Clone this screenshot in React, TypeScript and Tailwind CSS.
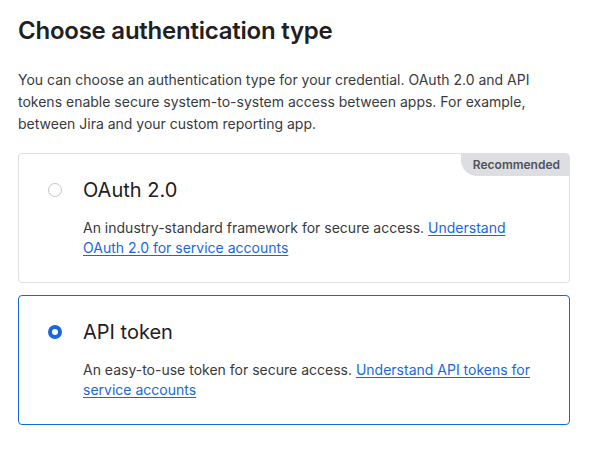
import React from "react";

type Option = {
	id: string;
	title: string;
	text: string;
	link: string;
	badge?: string;
};

const options: Option[] = [
	{
		id: "oauth",
		title: "OAuth 2.0",
		text: "An industry-standard framework for secure access. ",
		link: "Understand OAuth 2.0 for service accounts",
		badge: "Recommended",
	},
	{
		id: "token",
		title: "API token",
		text: "An easy-to-use token for secure access. ",
		link: "Understand API tokens for service accounts",
	},
];

function Radio({ checked }: { checked: boolean }) {
	if (checked) {
		return (
			<span className="block h-[14px] w-[14px] rounded-full border-[4px] border-[#1868db] bg-white" />
		);
	}
	return (
		<span className="block h-[14px] w-[14px] rounded-full border border-[#c3c6cc] bg-white" />
	);
}

export default function App() {
	const selected = "token";

	return (
		<div
			className="min-h-[457px] bg-white pl-[18px] pr-[26px] pt-[15px] text-[#292a2e]"
			style={{ fontFamily: "Inter, 'Noto Sans', sans-serif" }}
		>
			<h1 className="text-[24px] font-semibold leading-[32px] tracking-[-0.01em] text-[#1f2023]">
				Choose authentication type
			</h1>
			<p className="mt-[22px] text-[14px] leading-[22px] text-[#383a40]">
				You can choose an authentication type for your credential. OAuth 2.0
				and API tokens enable secure system-to-system access between apps. For
				example, between Jira and your custom reporting app.
			</p>

			<div className="mt-[18px] flex flex-col gap-[12px]">
				{options.map((o) => {
					const checked = o.id === selected;
					return (
						<div
							key={o.id}
							className={
								checked
									? "relative flex h-[130px] rounded-[4px] border border-[#1868db] pl-[29px] pr-6 pt-[22px]"
									: "relative flex h-[130px] rounded-[4px] border border-[#dcdfe4] pl-[29px] pr-6 pt-[22px]"
							}
						>
							{o.badge && (
								<span className="absolute right-0 top-0 rounded-bl-[16px] rounded-tr-[3px] bg-[#dddee1] py-[3px] pl-[12px] pr-[9px] text-[12px] font-semibold leading-[16px] text-[#505258]">
									{o.badge}
								</span>
							)}
							<div className="flex h-[28px] w-[35px] shrink-0 items-center">
								<Radio checked={checked} />
							</div>
							<div className="flex flex-col">
								<div className="text-[20px] leading-[28px] text-[#1f2023]">
									{o.title}
								</div>
								<p className="mt-[14px] text-[14px] leading-[20px] text-[#383a40]">
									{o.text}
									<a
										href="#"
										className="text-[#1868db] underline underline-offset-2"
									>
										{o.link}
									</a>
								</p>
							</div>
						</div>
					);
				})}
			</div>
		</div>
	);
}
